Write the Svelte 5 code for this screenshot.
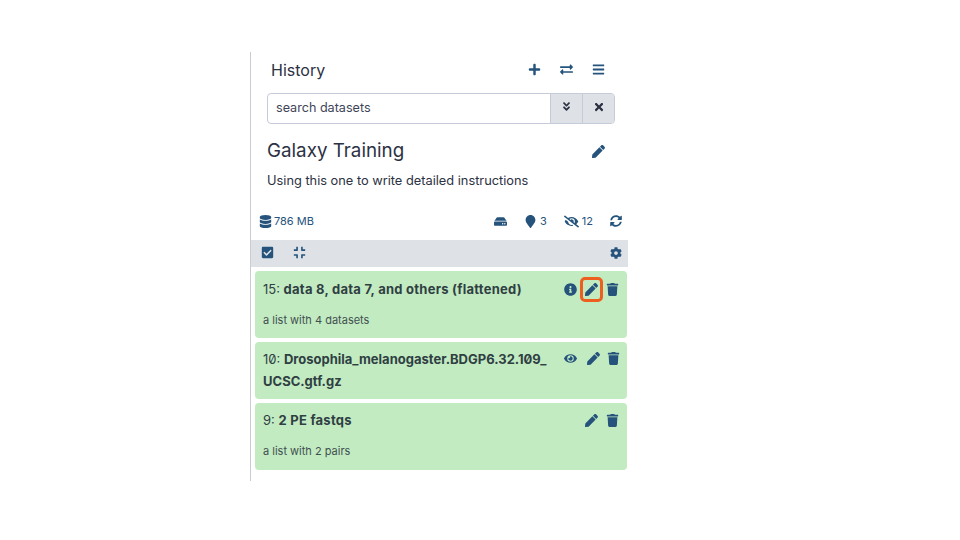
<script>
	const icons = {
		plus: [448, 'M416 208H272V64c0-17.67-14.33-32-32-32h-32c-17.67 0-32 14.33-32 32v144H32c-17.67 0-32 14.33-32 32v32c0 17.67 14.33 32 32 32h144v144c0 17.67 14.33 32 32 32h32c17.67 0 32-14.33 32-32V304h144c17.67 0 32-14.33 32-32v-32c0-17.67-14.33-32-32-32z'],
		exchange: [512, 'M0 168v-16c0-13.255 10.745-24 24-24h360V80c0-21.367 25.899-32.042 40.971-16.971l80 80c9.372 9.373 9.372 24.569 0 33.941l-80 80C409.956 271.982 384 261.456 384 240v-48H24c-13.255 0-24-10.745-24-24zm488 152H128v-48c0-21.314-25.862-32.08-40.971-16.971l-80 80c-9.372 9.373-9.372 24.569 0 33.941l80 80C102.057 463.997 128 453.437 128 432v-48h360c13.255 0 24-10.745 24-24v-16c0-13.255-10.745-24-24-24z'],
		bars: [448, 'M16 132h416c8.837 0 16-7.163 16-16V76c0-8.837-7.163-16-16-16H16C7.163 60 0 67.163 0 76v40c0 8.837 7.163 16 16 16zm0 160h416c8.837 0 16-7.163 16-16v-40c0-8.837-7.163-16-16-16H16c-8.837 0-16 7.163-16 16v40c0 8.837 7.163 16 16 16zm0 160h416c8.837 0 16-7.163 16-16v-40c0-8.837-7.163-16-16-16H16c-8.837 0-16 7.163-16 16v40c0 8.837 7.163 16 16 16z'],
		pen: [512, 'M290.74 93.24l128.02 128.02-277.99 277.99-114.14 12.6C11.35 513.54-1.56 500.62.14 485.34l12.7-114.22 277.9-277.88zm207.2-19.06l-60.11-60.11c-18.75-18.75-49.16-18.75-67.91 0l-56.55 56.55 128.02 128.02 56.55-56.55c18.75-18.76 18.75-49.16 0-67.91z'],
		trash: [448, 'M432 32H312l-9.4-18.7A24 24 0 0 0 281.1 0H166.8a23.72 23.72 0 0 0-21.4 13.3L136 32H16A16 16 0 0 0 0 48v32a16 16 0 0 0 16 16h416a16 16 0 0 0 16-16V48a16 16 0 0 0-16-16zM53.2 467a48 48 0 0 0 47.9 45h245.8a48 48 0 0 0 47.9-45L416 128H32z'],
		times: [352, 'M242.72 256l100.07-100.07c12.28-12.28 12.28-32.19 0-44.48l-22.24-22.24c-12.28-12.28-32.19-12.28-44.48 0L176 189.28 75.93 89.21c-12.28-12.28-32.19-12.28-44.48 0L9.21 111.45c-12.28 12.28-12.28 32.19 0 44.48L109.28 256 9.21 356.07c-12.28 12.28-12.28 32.19 0 44.48l22.24 22.24c12.28 12.28 32.2 12.28 44.48 0L176 322.72l100.07 100.07c12.28 12.28 32.2 12.28 44.48 0l22.24-22.24c12.28-12.28 12.28-32.19 0-44.48L242.72 256z'],
		angles: [320, 'M143 256.3L7 120.3c-9.4-9.4-9.4-24.6 0-33.9l22.6-22.6c9.4-9.4 24.6-9.4 33.9 0l96.4 96.4 96.4-96.4c9.4-9.4 24.6-9.4 33.9 0L313 86.3c9.4 9.4 9.4 24.6 0 33.9l-136 136c-9.4 9.5-24.6 9.5-34 .1zm34 192l136-136c9.4-9.4 9.4-24.6 0-33.9l-22.6-22.6c-9.4-9.4-24.6-9.4-33.9 0L160 352.1l-96.4-96.4c-9.4-9.4-24.6-9.4-33.9 0L7 278.3c-9.4 9.4-9.4 24.6 0 33.9l136 136c9.4 9.5 24.6 9.5 34 .1z'],
		database: [448, 'M448 73.143v45.714C448 159.143 347.667 192 224 192S0 159.143 0 118.857V73.143C0 32.857 100.333 0 224 0s224 32.857 224 73.143zM448 176v102.857C448 319.143 347.667 352 224 352S0 319.143 0 278.857V176c48.125 33.143 136.208 48.572 224 48.572S399.874 209.143 448 176zm0 160v102.857C448 479.143 347.667 512 224 512S0 479.143 0 438.857V336c48.125 33.143 136.208 48.572 224 48.572S399.874 369.143 448 336z'],
		hdd: [576, 'M576 304v96c0 26.51-21.49 48-48 48H48c-26.51 0-48-21.49-48-48v-96c0-26.51 21.49-48 48-48h480c26.51 0 48 21.49 48 48zm-48-80a79.557 79.557 0 0 1 30.777 6.165L462.25 85.374A48.003 48.003 0 0 0 422.311 64H153.689a48 48 0 0 0-39.938 21.374L17.223 230.165A79.557 79.557 0 0 1 48 224h480zm-48 96c-17.673 0-32 14.327-32 32s14.327 32 32 32 32-14.327 32-32-14.327-32-32-32zm-96 0c-17.673 0-32 14.327-32 32s14.327 32 32 32 32-14.327 32-32-14.327-32-32-32z'],
		marker: [384, 'M172.268 501.67C26.97 291.031 0 269.413 0 192 0 85.961 85.961 0 192 0s192 85.961 192 192c0 77.413-26.97 99.031-172.268 309.67-9.535 13.774-29.93 13.773-39.464 0z'],
		eyeSlash: [640, 'M320 400c-75.85 0-137.25-58.71-142.9-133.11L72.2 185.82c-13.79 17.3-26.48 35.59-36.72 55.59a32.35 32.35 0 0 0 0 29.19C89.71 376.41 197.07 448 320 448c26.91 0 52.87-4 77.89-10.46L346 397.39a144.13 144.13 0 0 1-26 2.61zm313.82 58.1l-110.55-85.44a331.25 331.25 0 0 0 81.25-102.07 32.35 32.35 0 0 0 0-29.19C550.29 135.59 442.93 64 320 64a308.15 308.15 0 0 0-147.32 37.7L45.46 3.37A16 16 0 0 0 23 6.18L3.37 31.45A16 16 0 0 0 6.18 53.9l588.36 454.73a16 16 0 0 0 22.46-2.81l19.64-25.27a16 16 0 0 0-2.82-22.45zm-183.72-142l-39.3-30.38A94.75 94.75 0 0 0 416 256a94.76 94.76 0 0 0-121.31-92.21A47.65 47.65 0 0 1 304 192a46.64 46.64 0 0 1-1.54 10l-73.61-56.89A142.31 142.31 0 0 1 320 112a143.92 143.92 0 0 1 144 144c0 21.63-5.29 41.79-13.9 60.11z'],
		sync: [512, 'M370.72 133.28C339.458 104.008 298.888 87.962 255.848 88c-77.458.068-144.328 53.178-162.791 126.85-1.344 5.363-6.122 9.15-11.651 9.15H24.103c-7.498 0-13.194-6.807-11.807-14.176C33.933 94.924 134.813 8 256 8c66.448 0 126.791 26.136 171.315 68.685L463.03 40.97C478.149 25.851 504 36.559 504 57.941V192c0 13.255-10.745 24-24 24H345.941c-21.382 0-32.09-25.851-16.971-40.971l41.75-41.749zM32 296h134.059c21.382 0 32.09 25.851 16.971 40.971l-41.75 41.75c31.262 29.273 71.835 45.319 114.876 45.28 77.418-.07 144.315-53.144 162.787-126.849 1.344-5.363 6.122-9.15 11.651-9.15h57.304c7.498 0 13.194 6.807 11.807 14.176C478.067 417.076 377.187 504 256 504c-66.448 0-126.791-26.136-171.315-68.685L48.97 471.03C33.851 486.149 8 475.441 8 454.059V320c0-13.255 10.745-24 24-24z'],
		cog: [512, 'M487.4 315.7l-42.6-24.6c4.3-23.2 4.3-47 0-70.2l42.6-24.6c4.9-2.8 7.1-8.6 5.5-14-11.1-35.6-30-67.8-54.7-94.6-3.8-4.1-10-5.1-14.8-2.3L380.8 110c-17.9-15.4-38.5-27.3-60.8-35.1V25.8c0-5.6-3.9-10.5-9.4-11.7-36.7-8.2-74.3-7.8-109.2 0-5.5 1.2-9.4 6.1-9.4 11.7V75c-22.2 7.9-42.8 19.8-60.8 35.1L88.7 85.5c-4.9-2.8-11-1.9-14.8 2.3-24.7 26.7-43.6 58.9-54.7 94.6-1.7 5.4.6 11.2 5.5 14L67.3 221c-4.3 23.2-4.3 47 0 70.2l-42.6 24.6c-4.9 2.8-7.1 8.6-5.5 14 11.1 35.6 30 67.8 54.7 94.6 3.8 4.1 10 5.1 14.8 2.3l42.6-24.6c17.9 15.4 38.5 27.3 60.8 35.1v49.2c0 5.6 3.9 10.5 9.4 11.7 36.7 8.2 74.3 7.8 109.2 0 5.5-1.2 9.4-6.1 9.4-11.7v-49.2c22.2-7.9 42.8-19.8 60.8-35.1l42.6 24.6c4.9 2.8 11 1.9 14.8-2.3 24.7-26.7 43.6-58.9 54.7-94.6 1.5-5.5-.7-11.3-5.6-14.1zM256 336c-44.1 0-80-35.9-80-80s35.9-80 80-80 80 35.9 80 80-35.9 80-80 80z'],
		check: [448, 'M400 480H48c-26.51 0-48-21.49-48-48V80c0-26.51 21.49-48 48-48h352c26.51 0 48 21.49 48 48v352c0 26.51-21.49 48-48 48zm-204.686-98.059l184-184c6.248-6.248 6.248-16.379 0-22.627l-22.627-22.627c-6.248-6.248-16.379-6.249-22.628 0L184 302.745l-70.059-70.059c-6.248-6.248-16.379-6.248-22.628 0l-22.627 22.627c-6.248 6.248-6.248 16.379 0 22.627l104 104c6.249 6.25 16.379 6.25 22.628.001z'],
		compress: [448, 'M436 192H312c-13.3 0-24-10.7-24-24V44c0-6.6 5.4-12 12-12h40c6.6 0 12 5.4 12 12v84h84c6.6 0 12 5.4 12 12v40c0 6.6-5.4 12-12 12zm-276-24V44c0-6.6-5.4-12-12-12h-40c-6.6 0-12 5.4-12 12v84H12c-6.6 0-12 5.4-12 12v40c0 6.6 5.4 12 12 12h124c13.3 0 24-10.7 24-24zm0 300V344c0-13.3-10.7-24-24-24H12c-6.6 0-12 5.4-12 12v40c0 6.6 5.4 12 12 12h84v84c0 6.6 5.4 12 12 12h40c6.6 0 12-5.4 12-12zm192 0v-84h84c6.6 0 12-5.4 12-12v-40c0-6.6-5.4-12-12-12H312c-13.3 0-24 10.7-24 24v124c0 6.6 5.4 12 12 12h40c6.6 0 12-5.4 12-12z'],
		eye: [576, 'M572.52 241.4C518.29 135.59 410.93 64 288 64S57.68 135.64 3.48 241.41a32.35 32.35 0 0 0 0 29.19C57.71 376.41 165.07 448 288 448s230.32-71.64 284.52-177.41a32.35 32.35 0 0 0 0-29.19zM288 400a144 144 0 1 1 144-144 143.93 143.93 0 0 1-144 144zm0-240a95.31 95.31 0 0 0-25.31 3.79 47.85 47.85 0 0 1-66.9 66.9A95.78 95.78 0 1 0 288 160z'],
		info: [512, 'M256 8C119.043 8 8 119.083 8 256c0 136.997 111.043 248 248 248s248-111.003 248-248C504 119.083 392.957 8 256 8zm0 110c23.196 0 42 18.804 42 42s-18.804 42-42 42-42-18.804-42-42 18.804-42 42-42zm56 254c0 6.627-5.373 12-12 12h-88c-6.627 0-12-5.373-12-12v-24c0-6.627 5.373-12 12-12h12v-64h-12c-6.627 0-12-5.373-12-12v-24c0-6.627 5.373-12 12-12h64c6.627 0 12 5.373 12 12v100h12c6.627 0 12 5.373 12 12v24z']
	};

	const items = [
		{ id: 15, name: 'data 8, data 7, and others (flattened)', sub: 'a list with 4 datasets', first: 'info', marked: true, kind: 'tall' },
		{ id: 10, name: 'Drosophila_melanogaster.BDGP6.32.109_ UCSC.gtf.gz', first: 'eye', kind: 'wrap' },
		{ id: 9, name: '2 PE fastqs', sub: 'a list with 2 pairs', kind: 'tall' }
	];
</script>

{#snippet icon(name, size = 14)}
	<svg class="icon" width={size} height={size} viewBox="0 0 {icons[name][0]} 512" aria-hidden="true">
		<path d={icons[name][1]} fill="currentColor" />
	</svg>
{/snippet}

<div class="panel">
	<header class="head">
		<span class="head-title">History</span>
		<div class="head-actions">
			{@render icon('plus', 13)}
			{@render icon('exchange', 13)}
			{@render icon('bars', 13)}
		</div>
	</header>

	<div class="search">
		<span class="search-input">search datasets</span>
		<span class="search-btn">{@render icon('angles', 11)}</span>
		<span class="search-btn">{@render icon('times', 12)}</span>
	</div>

	<div class="name-row">
		<h3>Galaxy Training</h3>
		{@render icon('pen', 13)}
	</div>
	<p class="annotation">Using this one to write detailed instructions</p>

	<div class="stats">
		<span class="stat stat-size">{@render icon('database', 13)}786 MB</span>
		<div class="stats-right">
			<span class="stat">{@render icon('hdd', 13)}</span>
			<span class="stat">{@render icon('marker', 13)}3</span>
			<span class="stat">{@render icon('eyeSlash', 15)}12</span>
			<span class="stat">{@render icon('sync', 12)}</span>
		</div>
	</div>

	<div class="toolbar">
		<span>{@render icon('check', 13)}</span>
		<span class="tool-compress">{@render icon('compress', 13)}</span>
		<span class="tool-cog">{@render icon('cog', 12)}</span>
	</div>

	<div class="list">
		{#each items as item}
			<div class="item {item.kind}">
				<div class="item-top">
					<div class="item-title">{item.id}: <b>{item.name}</b></div>
					<div class="item-actions">
						{#if item.first}
							<span class="act act-{item.first}">{@render icon(item.first, 13)}</span>
						{/if}
						<span class="act" class:marked={item.marked}>{@render icon('pen', 13)}</span>
						<span class="act">{@render icon('trash', 13)}</span>
					</div>
				</div>
				{#if item.sub}
					<div class="item-sub">{item.sub}</div>
				{/if}
			</div>
		{/each}
	</div>
</div>

<style>
	:global(body) {
		background: #fff;
	}

	.panel {
		box-sizing: border-box;
		width: 378px;
		height: 429px;
		margin: 52px 0 0 250px;
		padding-top: 8px;
		border-left: 1px solid #c9ccd0;
		font-family: Inter, 'Noto Sans', sans-serif;
		color: #2c3143;
		font-feature-settings: 'zero';
	}

	.icon {
		display: block;
		flex: none;
	}

	.head {
		display: flex;
		align-items: center;
		justify-content: space-between;
		height: 20px;
		padding: 0 23px 0 20px;
	}

	.head-title {
		font-size: 16px;
	}

	.head-actions {
		display: flex;
		align-items: center;
		gap: 19px;
		margin-bottom: 2px;
		color: #25537b;
	}

	.search {
		display: flex;
		height: 31px;
		margin: 13px 13px 0 16px;
		box-sizing: border-box;
		border: 1px solid #c5cbd8;
		border-radius: 4px;
		font-size: 12.6px;
		overflow: hidden;
	}

	.search-input {
		flex: 1;
		padding-left: 8px;
		line-height: 28px;
		color: #3f4559;
	}

	.search-btn {
		display: flex;
		align-items: center;
		justify-content: center;
		box-sizing: border-box;
		width: 32px;
		padding-bottom: 4px;
		background: #dee2e6;
		border-left: 1px solid #c5cbd8;
	}

	.name-row {
		display: flex;
		align-items: center;
		justify-content: space-between;
		margin: 15px 23px 0 16px;
		color: #25537b;
	}

	h3 {
		margin: 0;
		font-size: 18.8px;
		font-weight: 400;
		line-height: 24px;
		color: #2c3143;
	}

	.annotation {
		margin: 9px 0 0 16px;
		font-size: 12.8px;
		line-height: 18px;
	}

	.stats {
		display: flex;
		align-items: center;
		justify-content: space-between;
		height: 18px;
		margin-top: 22px;
		padding: 0 6px 0 8px;
		font-size: 11px;
		color: #25537b;
	}

	.stats-right {
		display: flex;
		align-items: center;
		gap: 17px;
	}

	.stat {
		display: flex;
		align-items: center;
		gap: 3px;
	}

	.stat-size {
		gap: 2px;
	}

	.toolbar {
		display: flex;
		align-items: center;
		box-sizing: border-box;
		height: 27px;
		margin-top: 10px;
		padding: 0 6px 2px 10px;
		background: #dee2e6;
		color: #25537b;
	}

	.tool-compress {
		margin-left: 19px;
	}

	.tool-cog {
		margin-left: auto;
	}

	.list {
		display: flex;
		flex-direction: column;
		gap: 4px;
		margin: 4px 1px 0 4px;
	}

	.item {
		box-sizing: border-box;
		padding: 8px 8px 0;
		background: #c3ebc2;
		border-radius: 4px;
		font-size: 13px;
		line-height: 21px;
		color: #2f3f42;
	}

	.item b {
		letter-spacing: 0.25px;
	}

	.tall {
		height: 67px;
	}

	.tall:last-child {
		padding-top: 7px;
	}

	.wrap {
		height: 57px;
		padding-top: 6px;
		line-height: 22px;
	}

	.wrap b {
		letter-spacing: 0;
	}

	.item-top {
		display: flex;
		align-items: flex-start;
		justify-content: space-between;
	}

	.item-title {
		flex: 1;
		min-width: 0;
	}

	.item-actions {
		display: flex;
		align-items: center;
		gap: 8px;
		height: 21px;
		color: #25537b;
	}

	.wrap .item-actions {
		gap: 7px;
		margin-right: -1px;
	}

	.act {
		position: relative;
		display: block;
	}

	.act-eye {
		margin-right: 3px;
	}

	.marked::after {
		content: '';
		position: absolute;
		inset: -6px -5px -6px -5px;
		border: 3px solid #ed5f1e;
		border-radius: 5px;
	}

	.item-sub {
		margin-top: 12px;
		font-size: 11px;
		line-height: 16px;
		color: #3f5050;
	}
</style>
